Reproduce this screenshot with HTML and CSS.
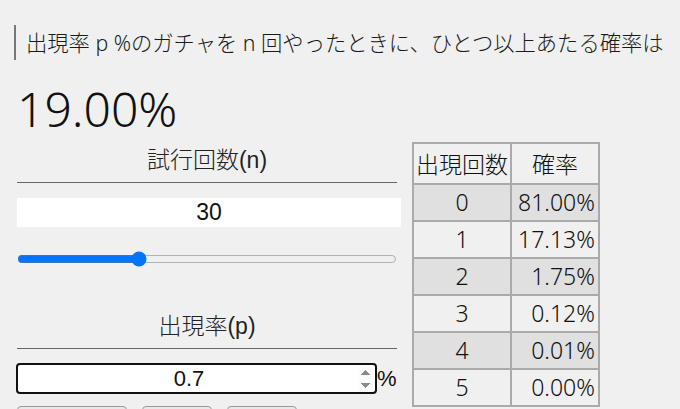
FILE: index.html
```html
<!DOCTYPE html>
<html lang="ja">
<head>
    <meta charset="UTF-8">
    <meta name="viewport" content="width=device-width, initial-scale=1.0">
    <title>ガチャ確率計算</title>
    <link rel="stylesheet" href="styles.css">
</head>
<body>
    <h2 class="question">出現率 p %のガチャを n 回やったときに、ひとつ以上あたる確率は</h2>
    <div class="result" id="result">19.00%</div>
    <div class="row">
        <div class="controls">
            <div class="label">試行回数(n)</div>
            <hr>
            <input type="text" class="count" id="count" value="30">
            <input type="range" class="slider" id="slider" min="0" max="96" value="30">
            <div class="label second">出現率(p)</div>
            <hr>
            <div class="rate">
                <input type="number" class="rateInput" id="rate" value="0.7" step="0.1">%
            </div>
            <div class="buttons">
                <button class="wide">SSR 0.7%</button>
                <button>1%</button>
                <button>3%</button>
            </div>
        </div>
        <table class="dist">
            <tr><th>出現回数</th><th>確率</th></tr>
            <tr class="odd"><td>0</td><td class="num">81.00%</td></tr>
            <tr><td>1</td><td class="num">17.13%</td></tr>
            <tr class="odd"><td>2</td><td class="num">1.75%</td></tr>
            <tr><td>3</td><td class="num">0.12%</td></tr>
            <tr class="odd"><td>4</td><td class="num">0.01%</td></tr>
            <tr><td>5</td><td class="num">0.00%</td></tr>
        </table>
    </div>
</body>
</html>
```

FILE: styles.css
```css
:root {
    background-color: #f0f0f0;
}

body {
    margin: 0;
    padding: 0 14px;
    color: #111;
    font-family: "Noto Sans", "Noto Sans CJK JP", sans-serif;
}

.question {
    margin: 25px 0 0 0;
    padding: 0 0 0 10px;
    border-left: 2px solid #777;
    font-size: 21.3px;
    font-weight: 300;
    line-height: 35px;
    color: #1a1a1a;
}

.result {
    margin: 24px 0 0 3px;
    font-size: 48px;
    font-weight: 300;
    line-height: 50px;
}

.row {
    display: flex;
    align-items: flex-start;
    margin-top: 8px;
}

.controls {
    width: 384px;
    margin-left: 3px;
    margin-right: 11px;
}

.label {
    font-family: "Liberation Sans", "Noto Sans CJK JP", sans-serif;
    font-size: 23px;
    font-weight: 300;
    text-align: center;
    line-height: 28px;
    margin-top: 4px;
    width: 380px;
    color: #222;
}

.label.second {
    margin-top: 45px;
}

hr {
    width: 380px;
    margin: 8px 0 0 0;
    border: none;
    border-top: 1px solid #666;
}

.count {
    display: block;
    width: 384px;
    height: 29px;
    margin-top: 15px;
    border: none;
    padding: 0;
    background: #fff;
    color: #111;
    text-align: center;
    font-family: "Liberation Sans", sans-serif;
    font-size: 23px;
}

.slider {
    display: block;
    width: 380px;
    margin: 24px 0 0 0;
}

.rate {
    display: flex;
    align-items: center;
    margin-top: 14px;
    margin-left: -1px;
    font-family: "Liberation Sans", sans-serif;
    font-size: 22px;
}

.rateInput {
    width: 361px;
    height: 31px;
    box-sizing: border-box;
    border: 2px solid #111;
    border-radius: 4px;
    padding: 0 2px;
    background: #fff;
    color: #111;
    text-align: center;
    font-family: "Liberation Sans", sans-serif;
    font-size: 22px;
}

.rateInput::-webkit-inner-spin-button {
    opacity: 1;
}

.buttons {
    display: flex;
    gap: 15px;
    margin-top: 12px;
}

button {
    width: 70px;
    height: 30px;
    border: 1px solid #999;
    border-radius: 4px;
    background: #e9e9e9;
    font-size: 14px;
}

button.wide {
    width: 110px;
}

.dist {
    border-collapse: collapse;
    border: 2px solid #aaa;
    font-size: 23px;
    font-weight: 300;
}

.dist th,
.dist td {
    border: 2px solid #aaa;
    padding: 0 2px;
    text-align: center;
    font-weight: 300;
    line-height: 33px;
}

.dist th {
    height: 39px;
    font-family: "Noto Sans CJK JP", sans-serif;
}

.dist td {
    height: 35px;
}

.dist td.num {
    text-align: right;
    padding-left: 6px;
    padding-right: 3px;
}

.dist tr.odd td {
    background-color: #e0e0e0;
}
```
